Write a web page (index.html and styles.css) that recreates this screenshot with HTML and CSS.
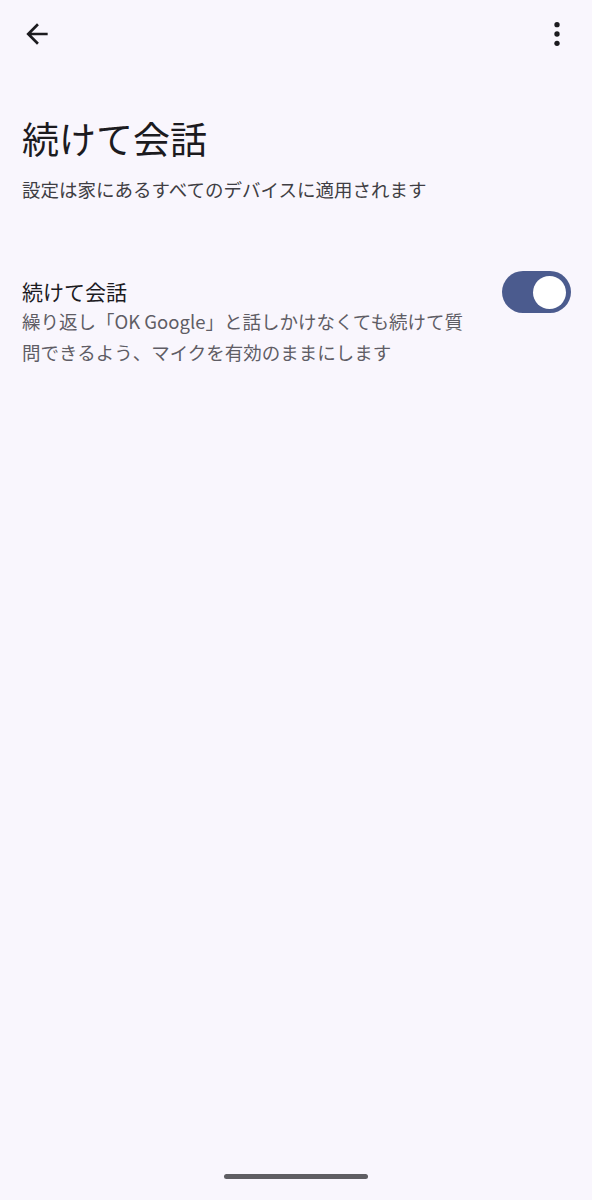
FILE: index.html
```html
<!DOCTYPE html>
<html lang="ja">
<head>
<meta charset="utf-8">
<link rel="stylesheet" href="styles.css">
</head>
<body>
<div class="screen">
  <header class="topbar">
    <svg class="icon" viewBox="0 0 24 24" width="32" height="32"><path d="M20 11H7.83l5.59-5.59L12 4l-8 8 8 8 1.41-1.41L7.83 13H20v-2z" fill="#1c1b1f"/></svg>
    <svg class="icon" viewBox="0 0 24 24" width="32" height="32"><circle cx="12" cy="5" r="2" fill="#1c1b1f"/><circle cx="12" cy="12" r="2" fill="#1c1b1f"/><circle cx="12" cy="19" r="2" fill="#1c1b1f"/></svg>
  </header>
  <h1 class="title">続けて会話</h1>
  <p class="subtitle">設定は家にあるすべてのデバイスに適用されます</p>
  <div class="item">
    <div class="item-text">
      <div class="item-title">続けて会話</div>
      <div class="item-desc">繰り返し「OK Google」と話しかけなくても続けて質問できるよう、マイクを有効のままにします</div>
    </div>
    <div class="switch"><div class="thumb"></div></div>
  </div>
  <div class="spacer"></div>
  <div class="home-bar"></div>
</div>
</body>
</html>
```
FILE: styles.css
```css
* { box-sizing: border-box; }
html, body { margin: 0; padding: 0; }
body {
  background: #f9f6fd;
  font-family: "Noto Sans CJK JP", "Noto Sans", sans-serif;
  color: #1c1b1f;
}
.screen {
  width: 592px;
  height: 1200px;
  display: flex;
  flex-direction: column;
}
.topbar {
  display: flex;
  justify-content: space-between;
  align-items: center;
  padding: 18px 19px 0 21px;
  height: 50px;
}
.icon { display: block; }
.title {
  margin: 62px 0 0 22px;
  font-size: 37px;
  font-weight: 400;
  line-height: 52px;
  letter-spacing: 0;
}
.subtitle {
  margin: 10px 0 0 22px;
  font-size: 18.5px;
  line-height: 30px;
  color: #3f3e44;
}
.item {
  display: flex;
  align-items: flex-start;
  justify-content: space-between;
  margin-top: 72px;
  padding: 0 22px 0 22px;
}
.item-text { width: 452px; }
.item-title {
  font-size: 21px;
  line-height: 30px;
  color: #1c1b1f;
}
.item-desc {
  font-size: 18.5px;
  line-height: 31px;
  color: #5f5d65;
  margin-top: 0;
}
.switch {
  width: 69px;
  height: 42px;
  border-radius: 21px;
  background: #4b5b8e;
  display: flex;
  align-items: center;
  justify-content: flex-end;
  padding-right: 5px;
  margin-top: -5px;
  margin-right: -1px;
  flex-shrink: 0;
}
.thumb {
  width: 33px;
  height: 33px;
  border-radius: 50%;
  background: #ffffff;
}
.spacer { flex: 1; }
.home-bar {
  align-self: center;
  width: 144px;
  height: 5px;
  border-radius: 3px;
  background: #5f5e63;
  margin-bottom: 21px;
  margin-left: -1px;
}
```
